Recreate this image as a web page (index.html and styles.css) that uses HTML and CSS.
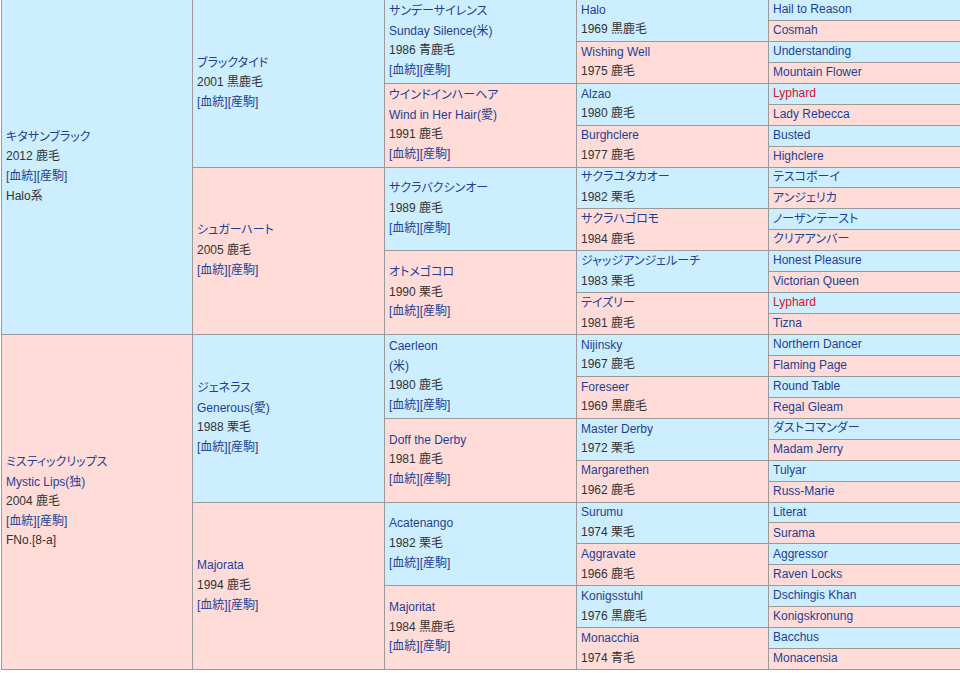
FILE: index.html
```html
<!DOCTYPE html>
<html lang="ja">
<head>
<meta charset="utf-8">
<title>血統表</title>
<link rel="stylesheet" href="styles.css">
</head>
<body>
<div class="pedigree">
  <div class="cell g1 m"><a class="line">キタサンブラック</a><span class="line">2012 鹿毛</span><span class="line"><a>[血統]</a><a>[産駒]</a></span><span class="line">Halo系</span></div>
  <div class="cell g2 m"><a class="line">ブラックタイド</a><span class="line">2001 黒鹿毛</span><span class="line"><a>[血統]</a><a>[産駒]</a></span></div>
  <div class="cell g3 m"><a class="line">サンデーサイレンス</a><a class="line">Sunday Silence(米)</a><span class="line">1986 青鹿毛</span><span class="line"><a>[血統]</a><a>[産駒]</a></span></div>
  <div class="cell g4 m"><a class="line">Halo</a><span class="line">1969 黒鹿毛</span></div>
  <div class="cell g5 m"><a>Hail to Reason</a></div>
  <div class="cell g5 f"><a>Cosmah</a></div>
  <div class="cell g4 f"><a class="line">Wishing Well</a><span class="line">1975 鹿毛</span></div>
  <div class="cell g5 m"><a>Understanding</a></div>
  <div class="cell g5 f"><a>Mountain Flower</a></div>
  <div class="cell g3 f"><a class="line">ウインドインハーヘア</a><a class="line">Wind in Her Hair(愛)</a><span class="line">1991 鹿毛</span><span class="line"><a>[血統]</a><a>[産駒]</a></span></div>
  <div class="cell g4 m"><a class="line">Alzao</a><span class="line">1980 鹿毛</span></div>
  <div class="cell g5 m"><a class="red">Lyphard</a></div>
  <div class="cell g5 f"><a>Lady Rebecca</a></div>
  <div class="cell g4 f"><a class="line">Burghclere</a><span class="line">1977 鹿毛</span></div>
  <div class="cell g5 m"><a>Busted</a></div>
  <div class="cell g5 f"><a>Highclere</a></div>
  <div class="cell g2 f"><a class="line">シュガーハート</a><span class="line">2005 鹿毛</span><span class="line"><a>[血統]</a><a>[産駒]</a></span></div>
  <div class="cell g3 m"><a class="line">サクラバクシンオー</a><span class="line">1989 鹿毛</span><span class="line"><a>[血統]</a><a>[産駒]</a></span></div>
  <div class="cell g4 m"><a class="line">サクラユタカオー</a><span class="line">1982 栗毛</span></div>
  <div class="cell g5 m"><a>テスコボーイ</a></div>
  <div class="cell g5 f"><a>アンジェリカ</a></div>
  <div class="cell g4 f"><a class="line">サクラハゴロモ</a><span class="line">1984 鹿毛</span></div>
  <div class="cell g5 m"><a>ノーザンテースト</a></div>
  <div class="cell g5 f"><a>クリアアンバー</a></div>
  <div class="cell g3 f"><a class="line">オトメゴコロ</a><span class="line">1990 栗毛</span><span class="line"><a>[血統]</a><a>[産駒]</a></span></div>
  <div class="cell g4 m"><a class="line">ジャッジアンジェルーチ</a><span class="line">1983 栗毛</span></div>
  <div class="cell g5 m"><a>Honest Pleasure</a></div>
  <div class="cell g5 f"><a>Victorian Queen</a></div>
  <div class="cell g4 f"><a class="line">テイズリー</a><span class="line">1981 鹿毛</span></div>
  <div class="cell g5 m"><a class="red">Lyphard</a></div>
  <div class="cell g5 f"><a>Tizna</a></div>

  <div class="cell g1 f"><a class="line">ミスティックリップス</a><a class="line">Mystic Lips(独)</a><span class="line">2004 鹿毛</span><span class="line"><a>[血統]</a><a>[産駒]</a></span><span class="line">FNo.[8-a]</span></div>
  <div class="cell g2 m"><a class="line">ジェネラス</a><a class="line">Generous(愛)</a><span class="line">1988 栗毛</span><span class="line"><a>[血統]</a><a>[産駒]</a></span></div>
  <div class="cell g3 m"><a class="line">Caerleon</a><a class="line">(米)</a><span class="line">1980 鹿毛</span><span class="line"><a>[血統]</a><a>[産駒]</a></span></div>
  <div class="cell g4 m"><a class="line">Nijinsky</a><span class="line">1967 鹿毛</span></div>
  <div class="cell g5 m"><a>Northern Dancer</a></div>
  <div class="cell g5 f"><a>Flaming Page</a></div>
  <div class="cell g4 f"><a class="line">Foreseer</a><span class="line">1969 黒鹿毛</span></div>
  <div class="cell g5 m"><a>Round Table</a></div>
  <div class="cell g5 f"><a>Regal Gleam</a></div>
  <div class="cell g3 f"><a class="line">Doff the Derby</a><span class="line">1981 鹿毛</span><span class="line"><a>[血統]</a><a>[産駒]</a></span></div>
  <div class="cell g4 m"><a class="line">Master Derby</a><span class="line">1972 栗毛</span></div>
  <div class="cell g5 m"><a>ダストコマンダー</a></div>
  <div class="cell g5 f"><a>Madam Jerry</a></div>
  <div class="cell g4 f"><a class="line">Margarethen</a><span class="line">1962 鹿毛</span></div>
  <div class="cell g5 m"><a>Tulyar</a></div>
  <div class="cell g5 f"><a>Russ-Marie</a></div>
  <div class="cell g2 f"><a class="line">Majorata</a><span class="line">1994 鹿毛</span><span class="line"><a>[血統]</a><a>[産駒]</a></span></div>
  <div class="cell g3 m"><a class="line">Acatenango</a><span class="line">1982 栗毛</span><span class="line"><a>[血統]</a><a>[産駒]</a></span></div>
  <div class="cell g4 m"><a class="line">Surumu</a><span class="line">1974 栗毛</span></div>
  <div class="cell g5 m"><a>Literat</a></div>
  <div class="cell g5 f"><a>Surama</a></div>
  <div class="cell g4 f"><a class="line">Aggravate</a><span class="line">1966 鹿毛</span></div>
  <div class="cell g5 m"><a>Aggressor</a></div>
  <div class="cell g5 f"><a>Raven Locks</a></div>
  <div class="cell g3 f"><a class="line">Majoritat</a><span class="line">1984 黒鹿毛</span><span class="line"><a>[血統]</a><a>[産駒]</a></span></div>
  <div class="cell g4 m"><a class="line">Konigsstuhl</a><span class="line">1976 黒鹿毛</span></div>
  <div class="cell g5 m"><a>Dschingis Khan</a></div>
  <div class="cell g5 f"><a>Konigskronung</a></div>
  <div class="cell g4 f"><a class="line">Monacchia</a><span class="line">1974 青毛</span></div>
  <div class="cell g5 m"><a>Bacchus</a></div>
  <div class="cell g5 f"><a>Monacensia</a></div>
</div>
</body>
</html>
```

FILE: styles.css
```css
html, body {
  margin: 0;
  padding: 0;
  background: #ffffff;
  overflow: hidden;
}

body {
  font-family: "Liberation Sans", "Noto Sans CJK JP", sans-serif;
  font-size: 12px;
  font-weight: 400;
  color: #333333;
  font-feature-settings: "palt";
}

.pedigree {
  display: grid;
  grid-template-columns: 190px repeat(4, 191px);
  grid-template-rows: repeat(32, 1fr);
  gap: 1px;
  width: 960px;
  height: 671px;
  box-sizing: border-box;
  margin: -1px 0 0 1px;
  border: 1px solid #9a9a9a;
  background: #9a9a9a;
}

.cell {
  display: flex;
  flex-direction: column;
  justify-content: center;
  padding: 0 4px;
  line-height: 19.6px;
  min-height: 0;
  overflow: hidden;
  white-space: nowrap;
}

.m { background: #cdeefe; }
.f { background: #ffdcd8; }

.g1 { grid-column: 1; grid-row: span 16; }
.g2 { grid-column: 2; grid-row: span 8; }
.g3 { grid-column: 3; grid-row: span 4; }
.g4 { grid-column: 4; grid-row: span 2; }
.g5 { grid-column: 5; grid-row: span 1; }

.line { display: block; }

a {
  color: #1d3f96;
  text-decoration: none;
}

a.red { color: #e0101c; }
```
